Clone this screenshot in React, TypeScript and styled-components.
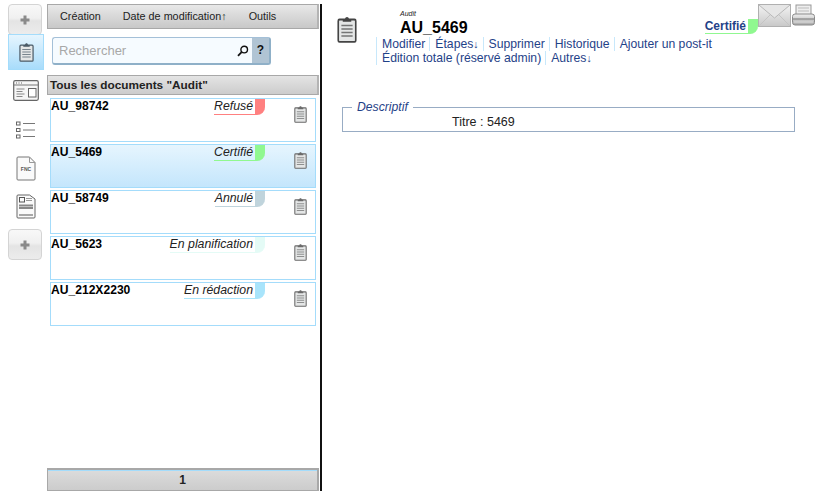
import React from 'react';
import styled, { createGlobalStyle } from 'styled-components';

const GlobalStyle = createGlobalStyle`
  html, body {
    margin: 0;
    padding: 0;
    background: #fff;
    overflow: hidden;
  }
  body {
    font-family: "Liberation Sans", Arial, sans-serif;
    font-size: 12px;
    color: #111;
  }
`;

const STATUS_COLORS: Record<string, string> = {
  refused: '#ff8080',
  certified: '#90f890',
  cancelled: '#c0d4dc',
  planned: '#e4fbf6',
  drafting: '#a8e4fb',
};

const DOCS = [
  { id: 'AU_98742', label: 'Refusé', status: 'refused' },
  { id: 'AU_5469', label: 'Certifié', status: 'certified', selected: true },
  { id: 'AU_58749', label: 'Annulé', status: 'cancelled' },
  { id: 'AU_5623', label: 'En planification', status: 'planned' },
  { id: 'AU_212X2230', label: 'En rédaction', status: 'drafting' },
];

function ClipboardIcon({ width = 16, height = 20, color = '#555' }: { width?: number; height?: number; color?: string }) {
  return (
    <svg width={width} height={height} viewBox="0 0 16 20" fill="none" preserveAspectRatio="none">
      <rect x="1" y="3.2" width="14" height="16" rx="1" stroke={color} strokeWidth="1.3" fill="#e4e6e6" />
      <path d="M4.6 4.8V3H6.4C6.6 0.8 9.4 0.8 9.6 3h1.8v1.8z" fill={color} />
      <path d="M3.5 7.5h9M3.5 10h9M3.5 12.5h9M3.5 15h9" stroke={color} strokeOpacity="0.7" strokeWidth="1.2" />
    </svg>
  );
}

function CardIcon() {
  return (
    <svg width="26" height="21" viewBox="0 0 26 21" fill="none">
      <rect x="0.7" y="0.7" width="24.6" height="19.6" rx="1.5" fill="#f6f6f6" stroke="#666" strokeWidth="1.2" />
      <path d="M1 5h24" stroke="#777" />
      <path d="M3 3h1M5.5 3h1M8 3h1" stroke="#666" />
      <path d="M3.5 9h8M3.5 11.5h6M3.5 14h8M3.5 16.5h6" stroke="#888" strokeWidth="1.2" />
      <rect x="15.5" y="8.5" width="7.5" height="8.5" fill="#fff" stroke="#666" />
    </svg>
  );
}

function ChecklistIcon() {
  return (
    <svg width="20" height="19" viewBox="0 0 20 19" fill="none">
      <rect x="0.5" y="1" width="3.5" height="3" stroke="#666" />
      <rect x="0.5" y="7.5" width="3.5" height="3" stroke="#666" />
      <rect x="0.5" y="14" width="3.5" height="3" stroke="#666" />
      <path d="M7 2.5h12M7 9h12M7 15.5h12" stroke="#777" />
    </svg>
  );
}

function FncIcon() {
  return (
    <svg width="20" height="25" viewBox="0 0 20 25" fill="none">
      <path d="M1 2a1 1 0 0 1 1-1h11.5L19 6.5V23a1 1 0 0 1-1 1H2a1 1 0 0 1-1-1z" fill="#fafafa" stroke="#777" />
      <path d="M13.5 1v5.5H19" stroke="#999" />
      <FncText x="10" y="14.5" textAnchor="middle">FNC</FncText>
    </svg>
  );
}

function FormIcon() {
  return (
    <svg width="20" height="25" viewBox="0 0 20 25" fill="none">
      <path d="M1 2a1 1 0 0 1 1-1h11.5L19 5v18a1 1 0 0 1-1 1H2a1 1 0 0 1-1-1z" fill="#fafafa" stroke="#666" />
      <rect x="3.5" y="3.5" width="5" height="4.5" stroke="#555" />
      <path d="M10 4.5h6M10 6.5h6" stroke="#999" />
      <path d="M3 11.5h14M3 14h14" stroke="#888" strokeWidth="1.8" />
      <path d="M3 21h14" stroke="#555" />
    </svg>
  );
}

function SearchIcon() {
  return (
    <svg width="12" height="12" viewBox="0 0 12 12" fill="none">
      <circle cx="7.2" cy="4.6" r="3.3" stroke="#111" strokeWidth="1.4" />
      <path d="M4.6 7.2L1 10.8" stroke="#111" strokeWidth="1.8" />
    </svg>
  );
}

function MailIcon() {
  return (
    <svg width="33" height="23" viewBox="0 0 33 23">
      <defs>
        <linearGradient id="mailFill" x1="0" y1="0" x2="0" y2="1">
          <stop offset="0" stopColor="#f4f4f4" />
          <stop offset="1" stopColor="#c8c8c8" />
        </linearGradient>
      </defs>
      <rect x="0.5" y="0.5" width="32" height="22" fill="url(#mailFill)" stroke="#b0b0b0" />
      <path d="M1 1l15.5 13L32 1" fill="#e6e6e6" stroke="#b8b8b8" />
      <path d="M1 22l11-11M32 22L21 11" stroke="#c4c4c4" fill="none" />
    </svg>
  );
}

function PrinterIcon() {
  return (
    <svg width="23" height="23" viewBox="0 0 23 23">
      <defs>
        <linearGradient id="printFill" x1="0" y1="0" x2="0" y2="1">
          <stop offset="0" stopColor="#f0f0f0" />
          <stop offset="1" stopColor="#a8a8a8" />
        </linearGradient>
      </defs>
      <rect x="4" y="1" width="15" height="10" fill="#eee" stroke="#999" />
      <path d="M6 4h11M6 7h11" stroke="#bbb" />
      <rect x="0.5" y="10" width="22" height="11" rx="2.5" fill="url(#printFill)" stroke="#8a8a8a" />
      <path d="M1 15h21" stroke="#777" />
      <path d="M2 18h19" stroke="#ddd" />
    </svg>
  );
}

function Plus() {
  return (
    <svg width="10" height="10" viewBox="0 0 10 10">
      <path d="M5 0.5v9M0.5 5h9" stroke="#8a8a8a" strokeWidth="3" />
    </svg>
  );
}

export default function App() {
  return (
    <>
      <GlobalStyle />
      <Page>
        <Sidebar>
          <AddButton><Plus /></AddButton>
          <ActiveItem><ClipboardIcon width={15} height={20} color="#4a5a66" /></ActiveItem>
          <SideItem $height={40}><CardIcon /></SideItem>
          <SideItem $height={40}><ChecklistIcon /></SideItem>
          <SideItem $height={36}><FncIcon /></SideItem>
          <SideItem $height={40}><FormIcon /></SideItem>
          <LastAddButton><Plus /></LastAddButton>
        </Sidebar>

        <ListPanel>
          <Toolbar>
            <ToolbarItem>Création</ToolbarItem>
            <ToolbarItem>Date de modification↑</ToolbarItem>
            <ToolbarItem>Outils</ToolbarItem>
          </Toolbar>
          <SearchRow>
            <SearchBox>
              <SearchInput>Rechercher</SearchInput>
              <SearchButton><SearchIcon /></SearchButton>
              <HelpButton>?</HelpButton>
            </SearchBox>
          </SearchRow>
          <ListTitle>Tous les documents "Audit"</ListTitle>
          <DocList>
            {DOCS.map((doc) => (
              <DocCard key={doc.id} $selected={doc.selected}>
                <DocHead>
                  <DocId>{doc.id}</DocId>
                  <Status $color={STATUS_COLORS[doc.status]}>{doc.label}</Status>
                </DocHead>
                <DocIcon><ClipboardIcon width={13} height={18} color="#6a6a6a" /></DocIcon>
              </DocCard>
            ))}
          </DocList>
          <Pager>1</Pager>
        </ListPanel>

        <Divider />

        <Main>
          <DocHeader>
            <HeaderIcon><ClipboardIcon width={20} height={28} color="#444" /></HeaderIcon>
            <HeaderBody>
              <HeaderTop>
                <Titles>
                  <TypeLabel>Audit</TypeLabel>
                  <DocTitle>AU_5469</DocTitle>
                </Titles>
                <HeaderStatus>Certifié</HeaderStatus>
                <HeaderTools>
                  <MailIcon />
                  <PrinterIcon />
                </HeaderTools>
              </HeaderTop>
              <Actions>
                <Action>Modifier</Action>
                <Action>Étapes<Arrow>↓</Arrow></Action>
                <Action>Supprimer</Action>
                <Action>Historique</Action>
                <Action>Ajouter un post-it</Action>
                <Action>Édition totale (réservé admin)</Action>
                <Action>Autres<Arrow>↓</Arrow></Action>
              </Actions>
            </HeaderBody>
          </DocHeader>
          <Fieldset>
            <Legend>Descriptif</Legend>
            <FieldRow>Titre : 5469</FieldRow>
          </Fieldset>
        </Main>
      </Page>
    </>
  );
}

const FncText = styled.text`
  font-family: "Liberation Sans", Arial, sans-serif;
  font-size: 5px;
  font-weight: bold;
  fill: #555;
`;

const Page = styled.div`
  display: flex;
  width: 831px;
  height: 499px;
  overflow: hidden;
`;

const Sidebar = styled.nav`
  width: 47px;
  flex: none;
  padding: 4px 0 0 8px;
  box-sizing: border-box;
  display: flex;
  flex-direction: column;
`;

const AddButton = styled.div`
  width: 34px;
  height: 31px;
  flex: none;
  box-sizing: border-box;
  border: 1px solid #d4d4d4;
  border-radius: 4px;
  background: linear-gradient(#f8f8f8, #f0f0f0 45%, #e4e4e4 55%, #ececec);
  display: flex;
  align-items: center;
  justify-content: center;
`;

const LastAddButton = styled(AddButton)`
  margin-top: 3px;
`;

const ActiveItem = styled.div`
  width: 36px;
  height: 36px;
  flex: none;
  margin-top: -1px;
  box-sizing: border-box;
  border: 1px solid #a4dcfb;
  background: linear-gradient(#e6f5fe, #a8dcfb);
  display: flex;
  align-items: center;
  justify-content: center;
`;

const SideItem = styled.div<{ $height: number }>`
  width: 36px;
  height: ${({ $height }) => $height}px;
  flex: none;
  display: flex;
  align-items: center;
  justify-content: center;
`;

const ListPanel = styled.section`
  width: 272px;
  height: 491px;
  flex: none;
  padding-top: 4px;
  box-sizing: border-box;
  display: flex;
  flex-direction: column;
`;

const Toolbar = styled.div`
  height: 25px;
  flex: none;
  box-sizing: border-box;
  padding: 0 0 2px 12px;
  border: 1px solid #a8a8a8;
  border-right: 2px solid #b4b4b4;
  background: linear-gradient(#e8e8e8, #c8c8c8);
  display: flex;
  align-items: center;
  gap: 22px;
`;

const ToolbarItem = styled.div`
  font-size: 10.8px;
  color: #222;
  white-space: nowrap;
`;

const SearchRow = styled.div`
  padding: 8px 0 0 5px;
  flex: none;
`;

const SearchBox = styled.div`
  width: 219px;
  height: 28px;
  box-sizing: border-box;
  border: 1px solid #a4c0d8;
  border-bottom: 2px solid #8fb0c8;
  border-right: 2px solid #8fb0c8;
  border-radius: 3px;
  background: #f6fbff;
  display: flex;
  align-items: stretch;
`;

const SearchInput = styled.div`
  flex: 1;
  padding-left: 6px;
  font-size: 13px;
  line-height: 25px;
  color: #a8a8a8;
`;

const SearchButton = styled.div`
  width: 18px;
  display: flex;
  align-items: center;
  justify-content: center;
`;

const HelpButton = styled.div`
  width: 17px;
  background: #b0c4d4;
  font-size: 12px;
  font-weight: bold;
  line-height: 25px;
  text-align: center;
  color: #111;
`;

const ListTitle = styled.div`
  margin-top: 10px;
  height: 20px;
  flex: none;
  box-sizing: border-box;
  padding-left: 2px;
  border: 1px solid #a8a8a8;
  border-right: 2px solid #b4b4b4;
  background: linear-gradient(#e4e4e4, #cccccc);
  font-size: 11.8px;
  font-weight: bold;
  line-height: 18px;
  color: #222;
`;

const DocList = styled.div`
  flex: 1;
  padding: 3px 3px 0;
  display: flex;
  flex-direction: column;
  gap: 2px;
`;

const DocCard = styled.article<{ $selected?: boolean }>`
  position: relative;
  height: 44px;
  flex: none;
  box-sizing: border-box;
  border: 1px solid #a4dcfb;
  background: ${({ $selected }) => ($selected ? 'linear-gradient(#e6f5fe, #c4e6fc)' : '#fff')};
`;

const DocHead = styled.div`
  display: flex;
  justify-content: space-between;
  align-items: flex-start;
`;

const DocId = styled.div`
  font-size: 12.1px;
  font-weight: bold;
  line-height: 15px;
  color: #000;
`;

const Status = styled.div<{ $color: string }>`
  height: 15px;
  margin-right: 50px;
  padding-right: 12px;
  border-bottom: 1px solid ${({ $color }) => $color};
  border-bottom-right-radius: 8px;
  background: linear-gradient(${({ $color }) => $color}, ${({ $color }) => $color}) right / 10px 100% no-repeat;
  font-size: 12.3px;
  font-style: italic;
  line-height: 14px;
  color: #222;
  white-space: nowrap;
`;

const DocIcon = styled.div`
  position: absolute;
  top: 6px;
  right: 8px;
`;

const Pager = styled.div`
  height: 23px;
  flex: none;
  box-sizing: border-box;
  border: 1px solid #a8a8a8;
  border-top-width: 2px;
  border-right-width: 2px;
  box-shadow: inset 0 1px 0 #a4dcfb;
  background: linear-gradient(#dcdcdc, #cccccc);
  font-size: 12px;
  font-weight: bold;
  line-height: 20px;
  text-align: center;
  color: #222;
`;

const Divider = styled.div`
  width: 2px;
  height: 487px;
  margin: 4px 0 0 1px;
  flex: none;
  background: #111;
`;

const Main = styled.main`
  flex: 1;
  min-width: 0;
  padding-left: 15px;
`;

const DocHeader = styled.header`
  display: flex;
  height: 100px;
`;

const HeaderIcon = styled.div`
  width: 39px;
  flex: none;
  padding-top: 15px;
`;

const HeaderBody = styled.div`
  flex: 1;
  min-width: 0;
`;

const HeaderTop = styled.div`
  position: relative;
  height: 37px;
  padding-left: 24px;
  display: flex;
`;

const Titles = styled.div`
  flex: 1;
  padding-top: 10px;
`;

const TypeLabel = styled.div`
  font-size: 7px;
  font-style: italic;
  line-height: 8px;
  color: #222;
`;

const DocTitle = styled.div`
  font-size: 16px;
  font-weight: bold;
  line-height: 19px;
  color: #000;
`;

const HeaderStatus = styled.div`
  align-self: flex-start;
  margin: 19px 73px 0 0;
  height: 14px;
  padding-right: 12px;
  border-bottom: 1px solid #90f890;
  border-bottom-right-radius: 8px;
  background: linear-gradient(#90f890, #90f890) right / 10px 100% no-repeat;
  font-size: 12px;
  font-weight: bold;
  line-height: 14px;
  color: #1f4288;
`;

const HeaderTools = styled.div`
  position: absolute;
  top: 4px;
  right: 16px;
  display: flex;
  gap: 1px;
`;

const Actions = styled.div`
  width: 400px;
  display: flex;
  flex-wrap: wrap;
  font-size: 12.2px;
  line-height: 14px;
  color: #1f4288;
`;

const Action = styled.span`
  height: 14px;
  padding: 0 4px 0 5px;
  border-left: 1px solid #c8e8fb;
  white-space: nowrap;
`;

const Arrow = styled.span`
  font-size: 10.5px;
  line-height: 0;
`;

const Fieldset = styled.fieldset`
  width: 453px;
  height: 32px;
  margin: 0 0 0 5px;
  padding: 0;
  box-sizing: border-box;
  border: 1px solid #98acc4;
`;

const Legend = styled.legend`
  margin-left: 9px;
  padding: 0 5px;
  font-size: 12.2px;
  line-height: 14px;
  font-style: italic;
  color: #1f4288;
`;

const FieldRow = styled.div`
  padding: 1px 0 0 109px;
  font-size: 12.5px;
  line-height: 14px;
  color: #222;
`;
